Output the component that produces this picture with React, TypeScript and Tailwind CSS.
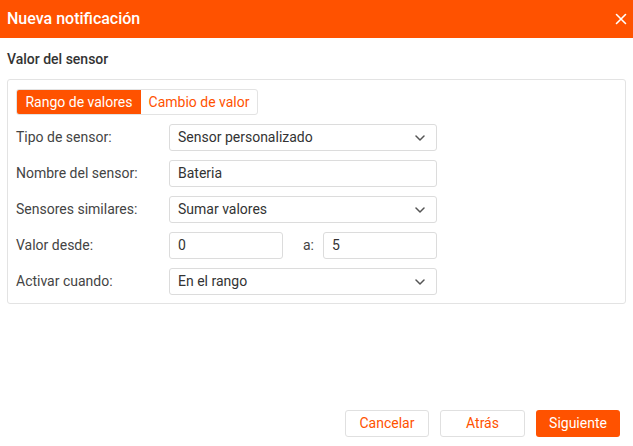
import React from "react";

const Chevron = () => (
  <svg width="10" height="6" viewBox="0 0 10 6" fill="none" className="mr-[11px]">
    <path d="M1 1l4 4 4-4" stroke="#555" strokeWidth="1.5" strokeLinecap="round" strokeLinejoin="round" />
  </svg>
);

const Select = ({ value }: { value: string }) => (
  <div className="flex h-[27px] w-[268px] items-center justify-between rounded-[3px] border border-[#dcdcdc] bg-white pl-[8px] text-[14px] text-[#333]">
    <span>{value}</span>
    <Chevron />
  </div>
);

const Input = ({ value, w }: { value: string; w: string }) => (
  <div className={`flex h-[27px] items-center rounded-[3px] border border-[#dcdcdc] bg-white pl-[8px] text-[14px] text-[#333] ${w}`}>
    {value}
  </div>
);

const Row = ({ label, children }: { label: string; children: React.ReactNode }) => (
  <div className="flex items-center">
    <div className="w-[153px] text-[14px] text-[#444]">{label}</div>
    {children}
  </div>
);

export default function App() {
  return (
    <div className="flex h-[446px] w-[633px] flex-col bg-white" style={{ fontFamily: "Roboto, 'Liberation Sans', sans-serif" }}>
      <div className="flex h-[38px] items-center justify-between bg-[#ff5200] pl-[7px] pr-[6px]">
        <span className="text-[16px] font-medium text-white">Nueva notificación</span>
        <svg width="12" height="12" viewBox="0 0 12 12">
          <path d="M1.5 1.5l9 9M10.5 1.5l-9 9" stroke="white" strokeWidth="1.6" strokeLinecap="round" />
        </svg>
      </div>
      <div className="px-[7px]">
        <div className="mt-[11px] text-[14px] font-medium text-[#333]">Valor del sensor</div>
        <div className="mt-[9px] w-[619px] rounded-[3px] border border-[#e3e3e3] px-[8px] pb-[8px] pt-[9px]">
          <div className="flex h-[26px] w-[242px] overflow-hidden rounded-[3px] border border-[#e3e3e3] text-[14px]">
            <div className="flex w-[124px] items-center justify-center bg-[#ff5200] text-white">Rango de valores</div>
            <div className="flex flex-1 items-center justify-center text-[#ff5200]">Cambio de valor</div>
          </div>
          <div className="mt-[9px] flex flex-col gap-[9px]">
            <Row label="Tipo de sensor:">
              <Select value="Sensor personalizado" />
            </Row>
            <Row label="Nombre del sensor:">
              <Input value="Bateria" w="w-[268px]" />
            </Row>
            <Row label="Sensores similares:">
              <Select value="Sumar valores" />
            </Row>
            <Row label="Valor desde:">
              <Input value="0" w="w-[114px]" />
              <span className="ml-[20px] mr-[9px] text-[14px] text-[#444]">a:</span>
              <Input value="5" w="w-[114px]" />
            </Row>
            <Row label="Activar cuando:">
              <Select value="En el rango" />
            </Row>
          </div>
        </div>
      </div>
      <div className="mt-auto mb-[9px] mr-[13px] flex justify-end gap-[11px] text-[14px]">
        <button className="h-[27px] w-[84px] rounded-[3px] border border-[#e0e0e0] bg-white text-[#ff5200]">Cancelar</button>
        <button className="h-[27px] w-[85px] rounded-[3px] border border-[#e0e0e0] bg-white text-[#ff5200]">Atrás</button>
        <button className="h-[27px] w-[84px] rounded-[3px] bg-[#ff5200] text-white">Siguiente</button>
      </div>
    </div>
  );
}
